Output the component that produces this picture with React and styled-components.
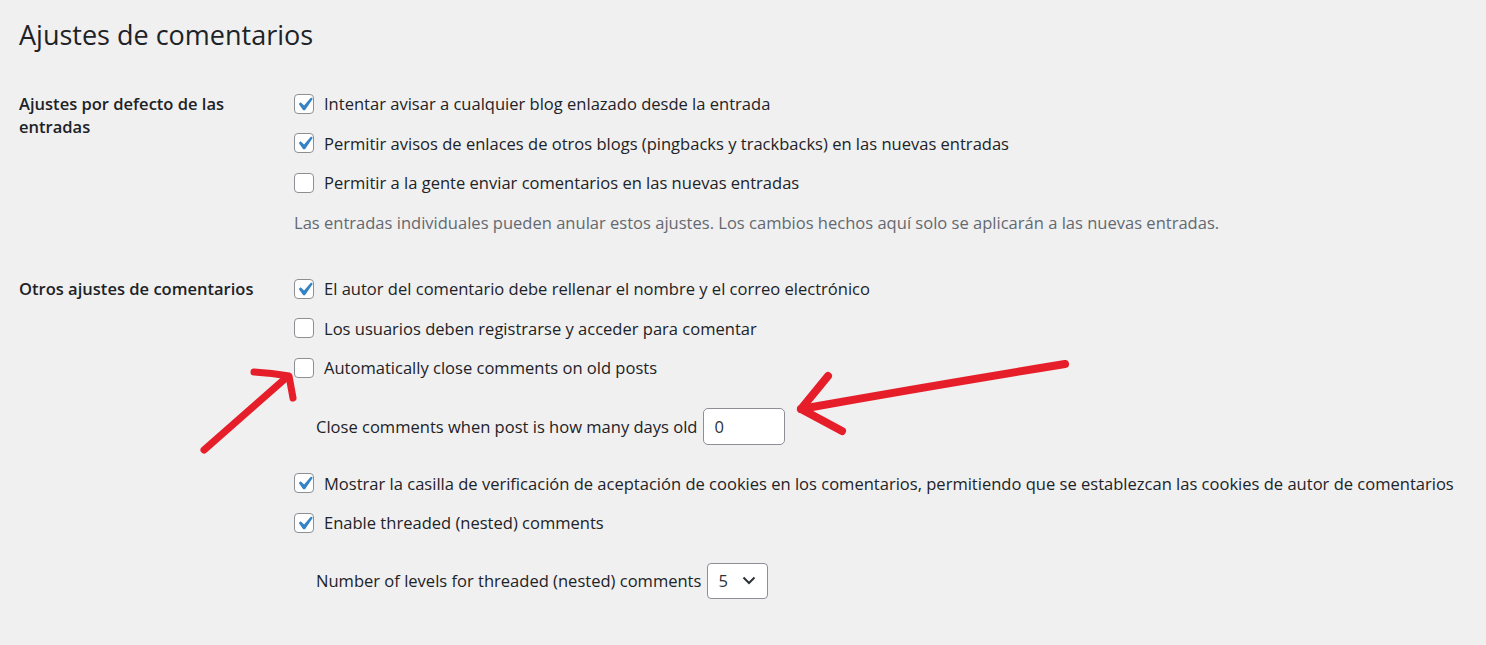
import styled, { createGlobalStyle } from 'styled-components';

const GlobalStyle = createGlobalStyle`
  html, body {
    margin: 0;
    padding: 0;
    background: #f0f0f1;
  }
  body {
    font-family: "Open Sans", "Noto Sans", sans-serif;
    color: #1d2327;
    font-size: 16.55px;
  }
`;

const Page = styled.div`
  position: relative;
  width: 1486px;
  height: 645px;
  overflow: hidden;
  padding: 16px 19px 0;
  box-sizing: border-box;
`;

const Title = styled.h1`
  margin: 0;
  font-size: 27px;
  font-weight: 400;
  line-height: 38px;
  color: #1d2327;
`;

const Section = styled.div`
  display: grid;
  grid-template-columns: 275px 1fr;
  margin-top: ${p => p.$top}px;
`;

const Label = styled.div`
  max-width: 240px;
  padding-top: 8px;
  font-weight: 600;
  line-height: 23px;
`;

const Field = styled.div`
  display: flex;
  flex-direction: column;
`;

const Row = styled.label`
  display: flex;
  align-items: center;
  gap: 10px;
  height: 39.5px;
  white-space: nowrap;
`;

const Box = styled.span`
  position: relative;
  flex: none;
  width: 20px;
  height: 20px;
  box-sizing: border-box;
  border: 1px solid #8c8f94;
  border-radius: 4px;
  background: #fff;

  svg {
    position: absolute;
    left: -4px;
    top: -4px;
  }
`;

const Note = styled.p`
  margin: 0;
  height: 39px;
  line-height: 39px;
  color: #646970;
`;

const SubRow = styled.div`
  display: flex;
  align-items: center;
  gap: 6px;
  padding-left: 22px;
  margin: ${p => p.$margin};
  white-space: nowrap;
`;

const NumberInput = styled.div`
  width: 82px;
  height: 37px;
  box-sizing: border-box;
  border: 1px solid #8c8f94;
  border-radius: 5px;
  background: #fff;
  padding-left: 10px;
  line-height: 35px;
  color: #2c3338;
`;

const Select = styled.div`
  display: flex;
  align-items: center;
  justify-content: space-between;
  width: 61px;
  height: 36px;
  box-sizing: border-box;
  border: 1px solid #8c8f94;
  border-radius: 4px;
  background: #fff;
  padding: 0 11px 0 10px;
  color: #2c3338;
`;

const Overlay = styled.svg`
  position: absolute;
  left: 0;
  top: 0;
  pointer-events: none;
`;

function Check({ checked, children }) {
  return (
    <Row>
      <Box>
        {checked && (
          <svg width="27" height="27" viewBox="0 0 20 20">
            <path d="M14.83 4.89l1.34.94-5.81 8.38H9.02L5.78 9.67l1.34-1.25 2.57 2.4z" fill="#3582c4" />
          </svg>
        )}
      </Box>
      {children}
    </Row>
  );
}

export default function App() {
  return (
    <>
      <GlobalStyle />
      <Page>
        <Title>Ajustes de comentarios</Title>

        <Section $top={30}>
          <Label>Ajustes por defecto de las entradas</Label>
          <Field>
            <Check checked>Intentar avisar a cualquier blog enlazado desde la entrada</Check>
            <Check checked>Permitir avisos de enlaces de otros blogs (pingbacks y trackbacks) en las nuevas entradas</Check>
            <Check>Permitir a la gente enviar comentarios en las nuevas entradas</Check>
            <Note>Las entradas individuales pueden anular estos ajustes. Los cambios hechos aquí solo se aplicarán a las nuevas entradas.</Note>
          </Field>
        </Section>

        <Section $top={27.5}>
          <Label>Otros ajustes de comentarios</Label>
          <Field>
            <Check checked>El autor del comentario debe rellenar el nombre y el correo electrónico</Check>
            <Check>Los usuarios deben registrarse y acceder para comentar</Check>
            <Check>Automatically close comments on old posts</Check>
            <SubRow $margin="20px 0 19px">
              Close comments when post is how many days old
              <NumberInput>0</NumberInput>
            </SubRow>
            <Check checked>Mostrar la casilla de verificación de aceptación de cookies en los comentarios, permitiendo que se establezcan las cookies de autor de comentarios</Check>
            <Check checked>Enable threaded (nested) comments</Check>
            <SubRow $margin="20px 0 0">
              Number of levels for threaded (nested) comments
              <Select>
                5
                <svg width="14" height="9" viewBox="0 0 14 9">
                  <path d="M1.5 1.5 7 7l5.5-5.5" fill="none" stroke="#2c3338" strokeWidth="2" />
                </svg>
              </Select>
            </SubRow>
          </Field>
        </Section>

        <Overlay width="1486" height="645" viewBox="0 0 1486 645">
          <g fill="none" stroke="#e61e2a" strokeLinecap="round" strokeLinejoin="round">
            <path d="M204 450 L287 377" strokeWidth="7" />
            <path d="M254 372 Q272 373 289 376 L293 398" strokeWidth="7" />
            <path d="M1065 364 Q930 386 801 409" strokeWidth="8" />
            <path d="M828 376 L801 409 L842 431" strokeWidth="8" />
          </g>
        </Overlay>
      </Page>
    </>
  );
}
